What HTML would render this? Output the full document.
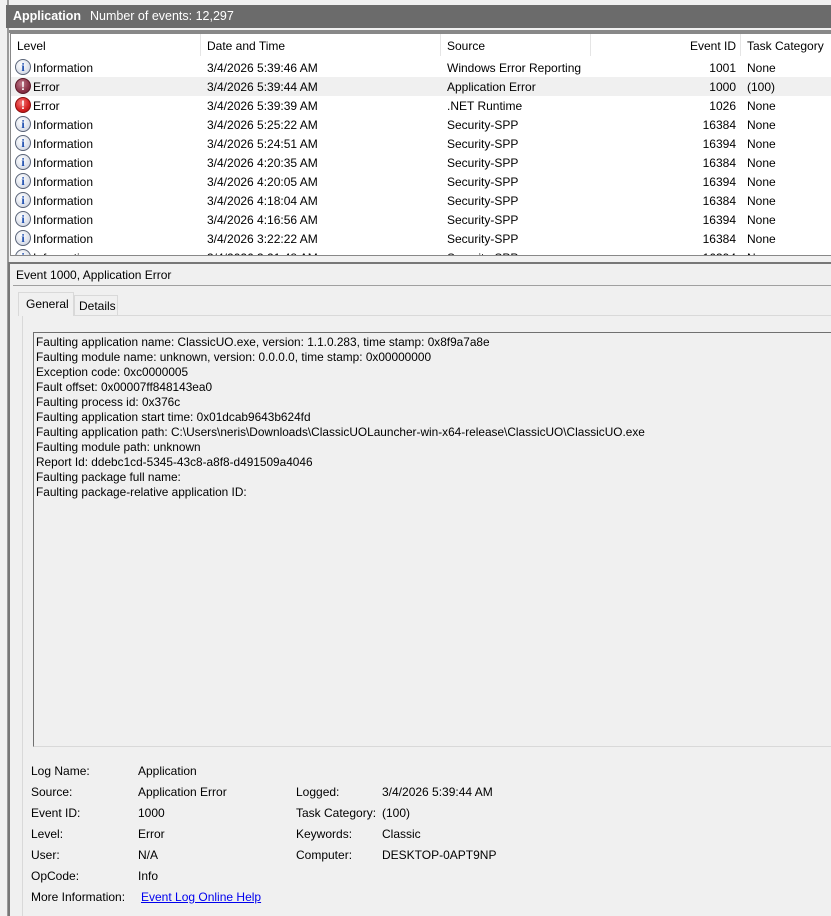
<!DOCTYPE html>
<html><head><style>
*{margin:0;padding:0;box-sizing:border-box}
body{width:831px;height:916px;background:#f0f0f0;font-family:"Liberation Sans",sans-serif;font-size:12px;color:#000;position:relative;overflow:hidden}
.a{position:absolute;white-space:nowrap}
.hdr{left:6px;top:5px;width:825px;height:23px;background:#6b6b6b;color:#fff;font-size:12.5px}
.tbl{left:10px;top:33px;width:821px;height:223px;background:#fff;border-left:1px solid #888;border-top:1px solid #888;border-bottom:1px solid #888;overflow:hidden}
.row{position:absolute;left:0;width:821px;height:19px}
.row span{position:absolute;top:3px}
.ic{position:absolute;left:4px;top:1px;width:16px;height:16px;border-radius:50%;text-align:center;font-weight:bold;font-size:12px;line-height:16px}
.info{background:radial-gradient(circle at 40% 35%,#fff,#d8dde8 70%,#8a93a8);border:1px solid #5a6478;color:#1f4fb0;font-family:"Liberation Serif",serif;line-height:14px}
.err{background:radial-gradient(circle at 40% 35%,#f47a7a,#d42020 60%,#a01010);border:1px solid #8a1010;color:#fff;line-height:14px}
.err2{background:radial-gradient(circle at 40% 35%,#c07a8a,#8a3348 60%,#6a1e30);border:1px solid #5a1a28;color:#fff;line-height:14px}
</style></head><body>
<div class="a" style="left:7px;top:0;width:2px;height:916px;background:#9a9a9a"></div>
<div class="a hdr"><b style="position:absolute;left:7px;top:4px">Application</b><span style="position:absolute;left:84px;top:4px">Number of events: 12,297</span></div>
<div class="a" style="left:9px;top:30px;width:822px;height:3px;background:#888"></div>
<div class="a tbl">
 <div class="row" style="top:0;height:23px;border-bottom:1px solid #fff">
  <span style="left:6px;top:5px">Level</span>
  <div class="a" style="left:189px;top:0;width:1px;height:22px;background:#e5e5e5"></div>
  <span style="left:196px;top:5px">Date and Time</span>
  <div class="a" style="left:429px;top:0;width:1px;height:22px;background:#e5e5e5"></div>
  <span style="left:436px;top:5px">Source</span>
  <div class="a" style="left:579px;top:0;width:1px;height:22px;background:#e5e5e5"></div>
  <span style="right:96px;top:5px">Event ID</span>
  <div class="a" style="left:729px;top:0;width:1px;height:22px;background:#e5e5e5"></div>
  <span style="left:736px;top:5px">Task Category</span>
 </div>
 <div class="row" style="top:24px"><div class="ic info">i</div><span style="left:22px">Information</span><span style="left:196px">3/4/2026 5:39:46 AM</span><span style="left:436px">Windows Error Reporting</span><span style="right:96px">1001</span><span style="left:736px">None</span></div>
 <div class="row" style="top:43px;background:#f0f0f0"><div class="ic err2">!</div><span style="left:22px">Error</span><span style="left:196px">3/4/2026 5:39:44 AM</span><span style="left:436px">Application Error</span><span style="right:96px">1000</span><span style="left:736px">(100)</span></div>
 <div class="row" style="top:62px"><div class="ic err">!</div><span style="left:22px">Error</span><span style="left:196px">3/4/2026 5:39:39 AM</span><span style="left:436px">.NET Runtime</span><span style="right:96px">1026</span><span style="left:736px">None</span></div>
 <div class="row" style="top:81px"><div class="ic info">i</div><span style="left:22px">Information</span><span style="left:196px">3/4/2026 5:25:22 AM</span><span style="left:436px">Security-SPP</span><span style="right:96px">16384</span><span style="left:736px">None</span></div>
 <div class="row" style="top:100px"><div class="ic info">i</div><span style="left:22px">Information</span><span style="left:196px">3/4/2026 5:24:51 AM</span><span style="left:436px">Security-SPP</span><span style="right:96px">16394</span><span style="left:736px">None</span></div>
 <div class="row" style="top:119px"><div class="ic info">i</div><span style="left:22px">Information</span><span style="left:196px">3/4/2026 4:20:35 AM</span><span style="left:436px">Security-SPP</span><span style="right:96px">16384</span><span style="left:736px">None</span></div>
 <div class="row" style="top:138px"><div class="ic info">i</div><span style="left:22px">Information</span><span style="left:196px">3/4/2026 4:20:05 AM</span><span style="left:436px">Security-SPP</span><span style="right:96px">16394</span><span style="left:736px">None</span></div>
 <div class="row" style="top:157px"><div class="ic info">i</div><span style="left:22px">Information</span><span style="left:196px">3/4/2026 4:18:04 AM</span><span style="left:436px">Security-SPP</span><span style="right:96px">16384</span><span style="left:736px">None</span></div>
 <div class="row" style="top:176px"><div class="ic info">i</div><span style="left:22px">Information</span><span style="left:196px">3/4/2026 4:16:56 AM</span><span style="left:436px">Security-SPP</span><span style="right:96px">16394</span><span style="left:736px">None</span></div>
 <div class="row" style="top:195px"><div class="ic info">i</div><span style="left:22px">Information</span><span style="left:196px">3/4/2026 3:22:22 AM</span><span style="left:436px">Security-SPP</span><span style="right:96px">16384</span><span style="left:736px">None</span></div>
 <div class="row" style="top:214px"><div class="ic info">i</div><span style="left:22px">Information</span><span style="left:196px">3/4/2026 3:21:48 AM</span><span style="left:436px">Security-SPP</span><span style="right:96px">16394</span><span style="left:736px">None</span></div>
</div>
<div class="a" style="left:8px;top:262px;width:823px;height:2px;background:#777"></div>
<div class="a" style="left:8px;top:262px;width:2px;height:654px;background:#777"></div>
<div class="a" style="left:16px;top:268px;font-size:12px">Event 1000, Application Error</div>
<div class="a" style="left:13px;top:285px;width:818px;height:1px;background:#a0a0a0"></div>
<div class="a" style="left:22px;top:315px;width:809px;height:601px;background:#f0f0f0;border-left:1px solid #d9d9d9;border-top:1px solid #d9d9d9"></div>
<div class="a" style="left:18px;top:292px;width:56px;height:24px;background:#f0f0f0;border:1px solid #d9d9d9;border-bottom:none"><span style="position:absolute;left:7px;top:4px">General</span></div>
<div class="a" style="left:74px;top:295px;width:44px;height:20px;background:#f0f0f0;border:1px solid #d9d9d9;border-bottom:none"><span style="position:absolute;left:4px;top:3px">Details</span></div>
<div class="a" style="left:33px;top:332px;width:798px;height:415px;border-left:1px solid #707070;border-top:1px solid #707070;border-bottom:1px solid #d9d9d9;line-height:15px;padding:2px 0 0 2px;font-size:11.85px">
Faulting application name: ClassicUO.exe, version: 1.1.0.283, time stamp: 0x8f9a7a8e<br>
Faulting module name: unknown, version: 0.0.0.0, time stamp: 0x00000000<br>
Exception code: 0xc0000005<br>
Fault offset: 0x00007ff848143ea0<br>
Faulting process id: 0x376c<br>
Faulting application start time: 0x01dcab9643b624fd<br>
Faulting application path: C:\Users\neris\Downloads\ClassicUOLauncher-win-x64-release\ClassicUO\ClassicUO.exe<br>
Faulting module path: unknown<br>
Report Id: ddebc1cd-5345-43c8-a8f8-d491509a4046<br>
Faulting package full name: <br>
Faulting package-relative application ID: 
</div>
<div class="a" style="left:31px;top:764px">Log Name:</div><div class="a" style="left:138px;top:764px">Application</div>
<div class="a" style="left:31px;top:785px">Source:</div><div class="a" style="left:138px;top:785px">Application Error</div>
<div class="a" style="left:296px;top:785px">Logged:</div><div class="a" style="left:382px;top:785px">3/4/2026 5:39:44 AM</div>
<div class="a" style="left:31px;top:806px">Event ID:</div><div class="a" style="left:138px;top:806px">1000</div>
<div class="a" style="left:296px;top:806px">Task Category:</div><div class="a" style="left:382px;top:806px">(100)</div>
<div class="a" style="left:31px;top:827px">Level:</div><div class="a" style="left:138px;top:827px">Error</div>
<div class="a" style="left:296px;top:827px">Keywords:</div><div class="a" style="left:382px;top:827px">Classic</div>
<div class="a" style="left:31px;top:848px">User:</div><div class="a" style="left:138px;top:848px">N/A</div>
<div class="a" style="left:296px;top:848px">Computer:</div><div class="a" style="left:382px;top:848px">DESKTOP-0APT9NP</div>
<div class="a" style="left:31px;top:869px">OpCode:</div><div class="a" style="left:138px;top:869px">Info</div>
<div class="a" style="left:31px;top:890px">More Information:</div><div class="a" style="left:141px;top:890px;color:#0000ee;text-decoration:underline">Event Log Online Help</div>
</body></html>
